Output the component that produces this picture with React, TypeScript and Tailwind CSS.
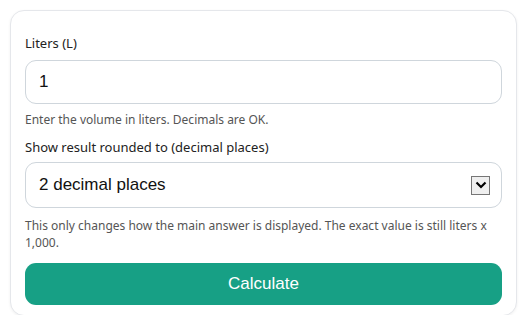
import React, { useState } from 'react';

/** 리터 → 밀리리터 변환 폼 카드 */
export default function App() {
  const [liters, setLiters] = useState('1');

  return (
    <div className="min-h-[315px] w-[528px] bg-white pl-[10px] pr-[11px] pt-[10px]">
      <div
        className="rounded-[14px] border border-[#e5e7eb] bg-white px-[14px] pb-[10px] pt-[23px] shadow-[0_1px_3px_rgba(0,0,0,0.06)]"
        style={{ fontFamily: '"Noto Sans", "Open Sans", sans-serif' }}
      >
        {/* 리터 입력 */}
        <label className="block text-[13px] leading-[18px] text-[#222]">Liters (L)</label>
        <input
          value={liters}
          onChange={(e) => setLiters(e.target.value)}
          className="mt-[8px] block h-[44px] w-full rounded-[11px] border border-[#cfd6dc] bg-white px-[13px] text-[17px] text-[#111] outline-none"
          style={{ fontFamily: '"Liberation Sans", Arial, sans-serif' }}
        />
        <p className="mt-[7px] text-[12px] leading-[17px] text-[#555]">
          Enter the volume in liters. Decimals are OK.
        </p>

        {/* 소수점 자리 선택 */}
        <label className="mt-[10px] block text-[13px] leading-[18px] text-[#222]">
          Show result rounded to (decimal places)
        </label>
        <div
          className="mt-[6px] flex h-[46px] w-full items-center justify-between rounded-[11px] border border-[#cfd6dc] bg-white pl-[13px] pr-[11px] text-[17px] text-[#111]"
          style={{ fontFamily: '"Liberation Sans", Arial, sans-serif' }}
        >
          <span>2 decimal places</span>
          <span className="flex h-[19px] w-[19px] items-center justify-center border border-[#767676] bg-[#efefef]">
            <svg width={12} height={8} viewBox="0 0 12 8" aria-hidden="true">
              <path d="M1.5 1.5 L6 6 L10.5 1.5" fill="none" stroke="#000" strokeWidth={2.2} />
            </svg>
          </span>
        </div>
        <p className="mt-[9px] text-[12px] leading-[17px] text-[#555]">
          This only changes how the main answer is displayed. The exact value is still liters x 1,000.
        </p>

        {/* 계산 버튼 */}
        <button
          className="mt-[12px] block h-[42px] w-full rounded-[11px] bg-[#17a085] text-[17px] text-white"
          style={{ fontFamily: '"Liberation Sans", Arial, sans-serif' }}
        >
          Calculate
        </button>
      </div>
    </div>
  );
}
